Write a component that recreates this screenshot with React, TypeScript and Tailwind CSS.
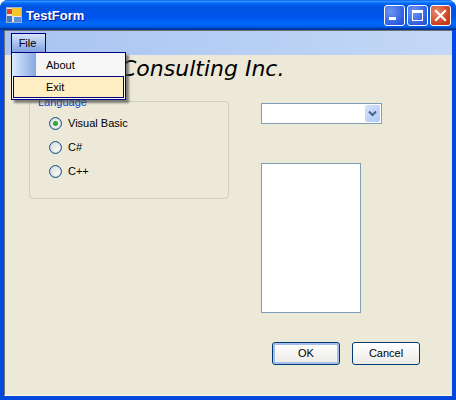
const uiFont = "font-['Liberation_Sans',Arial,sans-serif] text-[11px] leading-[13px]";

function RadioRow({ label, checked }: { label: string; checked?: boolean }) {
  return (
    <label className="flex h-[13px] items-center gap-[6px] text-black">
      <span className="flex h-[13px] w-[13px] items-center justify-center rounded-full border border-[#1c5180] bg-gradient-to-br from-[#dcdcd7] to-white shadow-[inset_0_0_0_1px_#c8d4e0]">
        {checked ? <span className="h-[5px] w-[5px] rounded-full bg-[#2fa72f]" /> : null}
      </span>
      {label}
    </label>
  );
}

function CaptionButton({ kind }: { kind: "min" | "max" | "close" }) {
  const tone =
    kind === "close"
      ? "bg-[radial-gradient(circle_at_30%_30%,#e98a6c,#c8401c_70%,#b5320f)]"
      : "bg-[radial-gradient(circle_at_30%_30%,#6f96f5,#2e5fe0_70%,#2350c8)]";
  return (
    <div className={`flex h-[21px] w-[21px] items-center justify-center rounded-[3px] border border-white ${tone}`}>
      <svg width="15" height="15" viewBox="0 0 15 15">
        {kind === "min" ? <rect x="2" y="9" width="7" height="3" fill="#fff" /> : null}
        {kind === "max" ? (
          <path d="M2 2h11v11H2z M3 5v7h9V5z" fill="#fff" fillRule="evenodd" />
        ) : null}
        {kind === "close" ? (
          <path d="M3 3l9 9M12 3l-9 9" stroke="#fff" strokeWidth="2.2" strokeLinecap="square" />
        ) : null}
      </svg>
    </div>
  );
}

function FormButton({ label, isDefault }: { label: string; isDefault?: boolean }) {
  return (
    <button
      type="button"
      className={`h-[23px] w-[68px] rounded-[3px] border border-[#003c74] text-black bg-gradient-to-b from-white to-[#ecebe5] ${
        isDefault ? "shadow-[inset_0_0_0_2px_#a6bdec]" : ""
      }`}
    >
      {label}
    </button>
  );
}

export default function App() {
  return (
    <div
      className={`${uiFont} flex h-[400px] w-[456px] flex-col overflow-hidden rounded-t-[8px] bg-[#0449de]`}
    >
      <div className="flex h-[30px] items-center bg-[linear-gradient(#0058ee_0%,#3593ff_4%,#288eff_6%,#127dff_8%,#036ffc_10%,#0262ee_14%,#0057e5_20%,#0054e3_24%,#0055eb_56%,#005bf5_66%,#026afe_76%,#0062ef_86%,#0052d6_92%,#0040ab_94%,#003092_100%)] pl-[6px] pr-[5px]">
        <svg width="16" height="16" viewBox="0 0 16 16">
          <rect x="0" y="0" width="16" height="16" fill="#9fb0cc" />
          <rect x="1" y="1" width="14" height="14" fill="#dfe6f2" />
          <rect x="1" y="2" width="5" height="5" fill="#d8442c" />
          <rect x="6" y="1" width="9" height="8" fill="#f6c52c" />
          <rect x="1" y="9" width="5" height="6" fill="#3e78c8" />
          <rect x="8" y="10" width="7" height="5" fill="#5c8fd6" />
        </svg>
        <span className="ml-[4px] flex-1 pt-px font-['Liberation_Sans',Arial,sans-serif] text-[13px] font-bold text-white [text-shadow:1px_1px_#0f1089]">
          TestForm
        </span>
        <div className="flex gap-[2px]">
          <CaptionButton kind="min" />
          <CaptionButton kind="max" />
          <CaptionButton kind="close" />
        </div>
      </div>

      <div className="relative mx-[4px] mb-[4px] flex flex-1 flex-col border-b border-l border-t border-b-[#f8f6ee] border-l-[#6f6f6f] border-t-[#6f6f6f] bg-[#ece9d8]">
        <div className="h-[24px] bg-gradient-to-r from-[#a8c4f2] to-[#c4d8f6] pl-[6px] pt-[2px]">
          <div className="flex h-[20px] w-[35px] items-center justify-center border border-b-0 border-[#000080] bg-gradient-to-b from-[#d6e4fb] to-[#7d9fe0] pr-[2px] text-black">
            File
          </div>
        </div>

        <div className="absolute left-[6px] top-[21px] z-10 w-[115px] border border-[#000080] bg-[#f6f6f6] text-black shadow-[3px_3px_2px_rgba(70,70,70,0.65)]">
          <div className="flex h-[23px] items-center pt-[2px]">
            <div className="-mt-[2px] h-[23px] w-[24px] bg-gradient-to-r from-[#dcebff] to-[#87a8e0]" />
            <span className="ml-[10px]">About</span>
          </div>
          <div className="mx-px mb-px flex h-[22px] items-center border border-[#000080] bg-[#ffeec2] pl-[32px]">
            Exit
          </div>
        </div>

        <h1 className="ml-[116px] mt-[2px] font-['DejaVu_Sans',sans-serif] text-[22px] font-normal italic leading-[24px] text-black">
          Consulting Inc.
        </h1>

        <div className="mt-[20px] flex pl-[24px]">
          <div className="relative flex h-[98px] w-[200px] flex-col gap-[11px] rounded-[4px] border border-[#d0d0bf] pl-[19px] pt-[15px]">
            <span className="absolute -top-[6px] left-[8px] bg-[#ece9d8] text-[#0046d5]">Language</span>
            <RadioRow label="Visual Basic" checked />
            <RadioRow label="C#" />
            <RadioRow label="C++" />
          </div>
          <div className="ml-[32px] flex flex-col pt-[2px]">
            <div className="flex h-[21px] w-[121px] items-center justify-end border border-[#7f9db9] bg-white pr-px">
              <div className="flex h-[17px] w-[15px] items-center justify-center rounded-[2px] bg-gradient-to-br from-[#d5e2fb] to-[#aec8f7]">
                <svg width="9" height="7" viewBox="0 0 9 7">
                  <path d="M1 1.5l3.5 3.5L8 1.5" fill="none" stroke="#4d6185" strokeWidth="2" />
                </svg>
              </div>
            </div>
            <div className="mt-[39px] h-[150px] w-[100px] border border-[#7f9db9] bg-white" />
          </div>
        </div>

        <div className="mt-[29px] flex justify-end gap-[12px] pr-[32px]">
          <FormButton label="OK" isDefault />
          <FormButton label="Cancel" />
        </div>
      </div>
    </div>
  );
}
